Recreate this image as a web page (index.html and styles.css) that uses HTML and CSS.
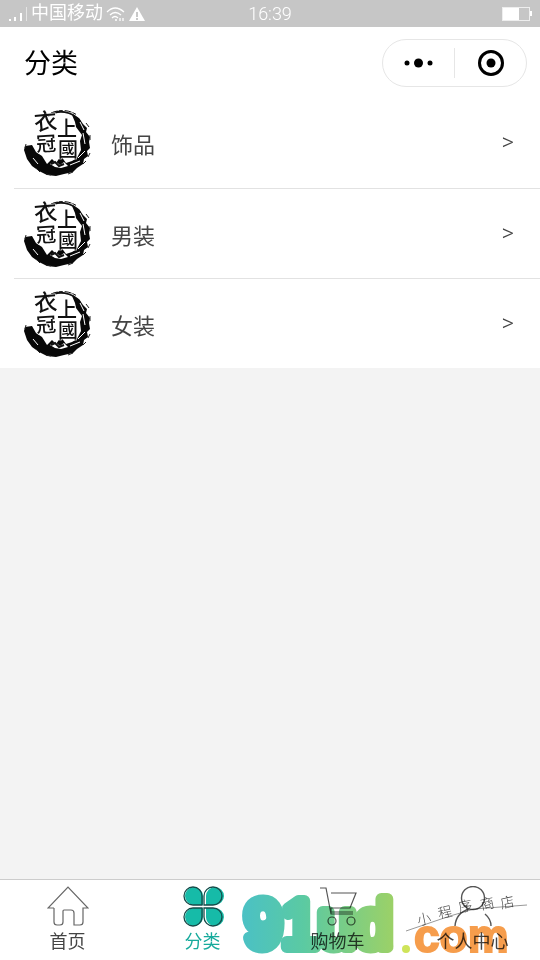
FILE: index.html
```html
<!DOCTYPE html>
<html lang="zh-CN">
<head>
  <meta charset="UTF-8">
  <meta name="viewport" content="width=device-width, initial-scale=1.0">
  <title>分类</title>
  <link rel="stylesheet" href="styles.css">
</head>
<body>
  <svg width="0" height="0" class="defs" aria-hidden="true">
    <symbol id="logo" viewBox="0 0 68 68">
      <path d="M24 7C34 0 48 2 56 12" fill="none" stroke="#111" stroke-width="2"/>
      <path d="M27 4C36 0 46 1 53 6" fill="none" stroke="#111" stroke-width="1" stroke-dasharray="7 1 4 2"/>
      <path d="M48 6l7 3 4 6 4 4-1 4 4 5-1 5 1 6-3 3 1 5-4 3-1 5-6 4-4 4-9 2-8 2-9-1-8-4-7-5-5-7-3-9 1-4 7-1 4 7 6 4 5 8 5-5 4 4 5-7 5 7 6-2 5-3 4-8-1-9 2-6-6-8-1-5z" fill="#080808"/>
      <path d="M56 13l4 8M59 24l2 11M54 49l7-7M46 56l10-4M9 49l5 6" stroke="#fff" stroke-width="1" fill="none"/>
      <path d="M62 14l3 4M66 26v5M66 44l-2 4M12 59l4 4M22 65l5 1M44 65l5-2M2 35l-1 4M59 55l3-3" stroke="#222" stroke-width="1" fill="none"/>
      <path d="M26 55l5-3 5 4 4-3 4 4-7 2-6-1z" fill="#fff"/>
      <path d="M27 55l4-2 4 4 5-2" fill="none" stroke="#111" stroke-width="2"/>
      <g class="logo-text">
        <text x="10" y="21" font-size="23" transform="rotate(-5 20 14)">衣</text>
        <text x="12" y="42" font-size="20" transform="rotate(-3 22 34)">冠</text>
        <text x="33" y="27" font-size="20">上</text>
        <text x="34" y="48" font-size="20">國</text>
      </g>
    </symbol>
  </svg>

  <div class="status">
    <div class="status-left">
      <svg width="20" height="16" viewBox="0 0 20 16"><path d="M1 13h2v2H1zM6 11h2v4H6zM12 7h2v8h-2z" fill="#fff"/><path d="M18 1h1v14h-1z" fill="#e4e4e4"/></svg>
      <span>中国移动</span>
      <svg width="20" height="16" viewBox="0 0 20 16" fill="none" stroke="#fff" stroke-width="1.3"><path d="M1 6Q9-2 18 6M4 9Q9 4 15 9M6 12Q9 9 12 12"/><path d="M9 14h2M14 12v3M17 12v3"/></svg>
      <svg width="16" height="16" viewBox="0 0 16 16"><path d="M8 1l8 14H0z" fill="#fff"/><path d="M8 6v5M8 12v2" stroke="#bbb" stroke-width="1.6"/></svg>
    </div>
    <time>16:39</time>
    <div class="status-right">
      <svg width="30" height="14" viewBox="0 0 30 14"><rect x=".5" y=".5" width="27" height="13" fill="none" stroke="#eee"/><path d="M1 1h16v12H1zM28 4h2v5h-2z" fill="#fff"/></svg>
    </div>
  </div>

  <header class="header">
    <h1>分类</h1>
    <div class="capsule">
      <button type="button" aria-label="更多"><svg width="30" height="12" viewBox="0 0 30 12"><circle cx="3" cy="6" r="2.5"/><circle cx="14.5" cy="6" r="4.5"/><circle cx="26" cy="6" r="2.5"/></svg></button>
      <button type="button" aria-label="关闭"><svg width="28" height="28" viewBox="0 0 28 28"><circle cx="14" cy="14" r="11.5" fill="none" stroke="#000" stroke-width="3"/><circle cx="14" cy="14" r="4.5"/></svg></button>
    </div>
  </header>

  <main class="list">
    <a class="item" href="#"><svg class="thumb"><use href="#logo"/></svg><span class="name">饰品</span><span class="arrow">&gt;</span></a>
    <a class="item" href="#"><svg class="thumb"><use href="#logo"/></svg><span class="name">男装</span><span class="arrow">&gt;</span></a>
    <a class="item" href="#"><svg class="thumb"><use href="#logo"/></svg><span class="name">女装</span><span class="arrow">&gt;</span></a>
  </main>

  <nav class="tabbar">
    <a class="tab" href="#">
      <svg width="42" height="42" viewBox="0 0 42 42" fill="none" stroke="#666" stroke-width="1.2"><path d="M7 22H1L21 1l20 21h-5v14q0 3-3 3h-6v-5M7 22v14q0 3 3 3h3q3 0 3-3V25q0-1 1-1h7q3 0 3 3v7"/></svg>
      <span>首页</span>
    </a>
    <a class="tab active" href="#">
      <svg width="42" height="42" viewBox="0 0 42 42">
        <g fill="#16bba8"><path d="M21 19V10a9 9 0 1 0-9 9zM24 19V10a9 9 0 1 1 9 9zM21 22v8a9 9 0 1 1-9-8zM24 22v8a9 9 0 1 0 9-8z"/></g>
        <g fill="none" stroke="#164b49" stroke-width="1.3"><path d="M20 19V10a9 9 0 1 0-9 9zM22 19V10a9 9 0 1 1 9 9zM20 22v9a9 9 0 1 1-9-9zM22 22v9a9 9 0 1 0 9-9z"/></g>
      </svg>
      <span>分类</span>
    </a>
    <a class="tab" href="#">
      <svg width="42" height="42" viewBox="0 0 42 42" fill="none" stroke="#555" stroke-width="1.2"><path d="M3 2h6l5 26h22M14 7h25l-6 15H13M14 26h22M14 22v6"/><circle cx="15" cy="35" r="4"/><circle cx="34" cy="35" r="4"/></svg>
      <span>购物车</span>
    </a>
    <a class="tab" href="#">
      <svg width="42" height="42" viewBox="0 0 42 42" fill="none" stroke="#555" stroke-width="1.4"><circle cx="21" cy="12" r="11.5"/><path d="M17 23Q4 27 3 40M33 28q6 5 6 12"/></svg>
      <span>个人中心</span>
    </a>
    <svg class="mark" width="300" height="80" viewBox="0 0 300 80">
      <defs>
        <linearGradient id="fade" gradientUnits="userSpaceOnUse" x1="3" x2="155" y1="0" y2="0">
          <stop offset="0" stop-color="#4bc1c4"/>
          <stop offset=".4" stop-color="#5bcaa2"/>
          <stop offset="1" stop-color="#9dd166"/>
        </linearGradient>
      </defs>
      <text class="mark-big" x="5" y="67" fill="url(#fade)" stroke="url(#fade)">91ud</text>
      <circle cx="166" cy="69" r="4" fill="#cfe45a"/>
      <text class="mark-com" x="174" y="72">com</text>
      <path d="M166 51l44-15 24-7 53-4" fill="none" stroke="#999"/>
      <g class="mark-note" transform="rotate(-12 180 44)">
        <text x="178" y="45">小</text>
        <text x="200" y="43">程</text>
        <text x="221" y="41">序</text>
        <text x="243" y="43">商</text>
        <text x="263" y="46">店</text>
      </g>
    </svg>
  </nav>
</body>
</html>
```

FILE: styles.css
```css
* { box-sizing: border-box; }
body { display: flex; flex-direction: column; min-height: 100vh; margin: 0; background: #f3f3f3; color: #444; font-family: Roboto, "Noto Sans CJK SC", sans-serif; }
a { color: inherit; text-decoration: none; }
svg { display: block; flex: none; }
.defs { position: absolute; }

.status { display: flex; align-items: center; height: 27px; padding: 0 8px; background: #c6c6c6; color: #fff; font-size: 18px; line-height: 26px; }
.status time { font-weight: 300; }
.status-left, .status-right { display: flex; flex: 1; align-items: center; gap: 3px; }
.status-left span { padding-bottom: 2px; }
.status-right { justify-content: flex-end; }

.header { display: flex; align-items: center; justify-content: space-between; height: 71px; padding: 0 13px 0 24px; background: #fff; color: #000; }
.header h1 { margin: 0; padding-top: 2px; font-size: 27px; font-weight: 400; line-height: 40px; }
.capsule { display: flex; align-items: center; width: 145px; height: 48px; border: 1px solid #e6e6e6; border-radius: 24px; }
.capsule button { display: flex; flex: 1; align-items: center; justify-content: center; height: 30px; padding: 0; border: 0; background: none; }
.capsule button + button { border-left: 1px solid #e6e6e6; }

.list { background: #fff; padding-left: 14px; }
.item { display: flex; align-items: center; height: 90px; padding: 0 26px 0 10px; }
.item + .item { border-top: 1px solid #e2e2e2; }
.thumb { width: 68px; height: 68px; }
.name { flex: 1; margin-left: 19px; font-size: 22px; }
.arrow { padding-bottom: 2px; font-size: 24px; font-weight: 300; color: #444; }
.logo-text { font-weight: 500; fill: #111; stroke: #fff; stroke-width: 1px; paint-order: stroke; }

.tabbar { position: relative; display: flex; height: 81px; margin-top: auto; border-top: 1px solid #ccc; background: #fff; }
.tab { display: flex; flex: 1; flex-direction: column; align-items: center; padding-top: 6px; font-size: 18px; line-height: 28px; }
.active { color: #16aa9c; }
.mark { position: absolute; top: 0; right: 0; mix-blend-mode: multiply; pointer-events: none; }
.mark-big { font: 400 66px "Liberation Sans", sans-serif; stroke-width: 12px; stroke-linejoin: round; }
.mark-com { font: 700 46px "Liberation Sans", sans-serif; fill: #f69d4c; stroke: #f69d4c; stroke-width: 2px; }
.mark-note { font-size: 14px; font-weight: 300; fill: #444; }
```
